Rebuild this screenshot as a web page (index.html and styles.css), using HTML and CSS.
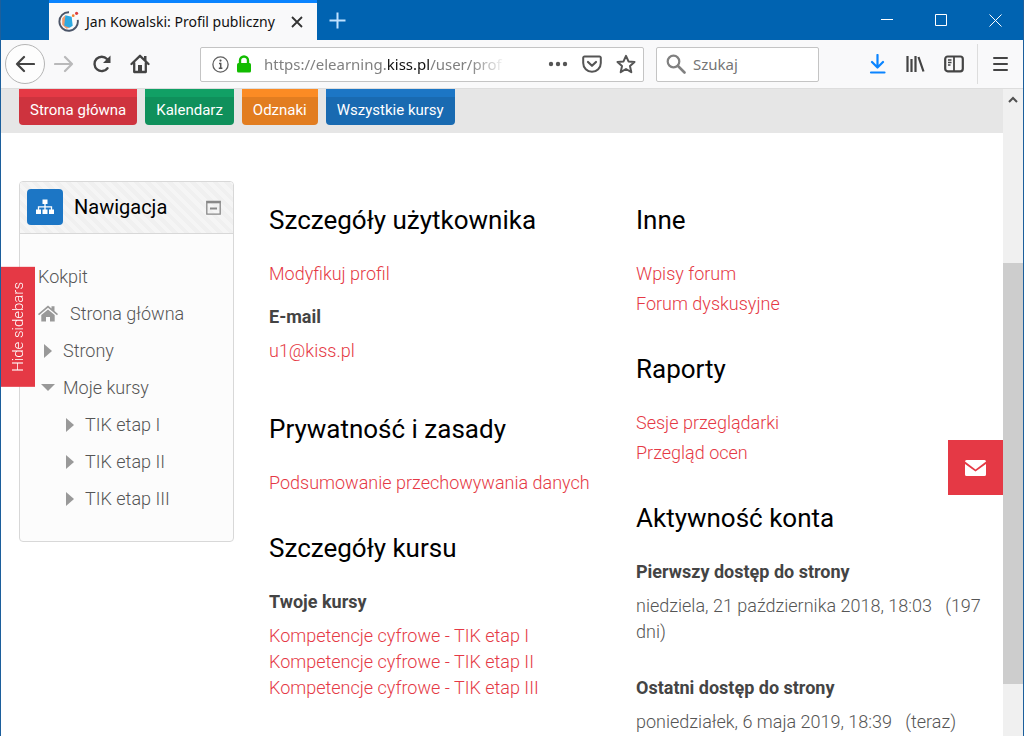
FILE: index.html
```html
<!DOCTYPE html>
<html lang="pl">
<head>
<meta charset="utf-8">
<meta name="viewport" content="width=device-width, initial-scale=1">
<title>Jan Kowalski: Profil publiczny</title>
<link rel="stylesheet" href="styles.css">
</head>
<body>
<div class="window">
  <header class="titlebar">
    <div class="tab">
      <svg class="favicon" viewBox="0 0 20 20" aria-hidden="true">
        <path d="M10.500 1.200A8.800 8.800 0 1 0 18.800 8.500" fill="none" stroke="#4b5568" stroke-width="1.800"/>
        <path d="M4 7l3-3v9l4 3-3 1-4-4z" fill="#f29a6c"/>
        <path d="M7 4l6 1.500 1 8.500-3 2-5-2z" fill="#2da9e1"/>
        <circle cx="14.500" cy="4.500" r="1.300" fill="#f08030"/>
        <circle cx="17.700" cy="2.200" r="1.500" fill="#dd3d3d"/>
      </svg>
      <span class="tab-title">Jan Kowalski: Profil publiczny</span>
      <button class="tab-close" aria-label="Zamknij kartę"><svg width="12" height="12" viewBox="0 0 12 12"><path d="M1 1l10 10M11 1L1 11" stroke="#333" stroke-width="1.800"/></svg></button>
    </div>
    <button class="new-tab" aria-label="Nowa karta"><svg width="17" height="17" viewBox="0 0 17 17"><path d="M8.500 0.500v16M0.500 8.500h16" stroke="#bfe2ff" stroke-width="2"/></svg></button>
    <div class="window-controls">
      <button aria-label="Minimalizuj"><svg width="12" height="12" viewBox="0 0 12 12"><path d="M0 5.500h12" stroke="#fff"/></svg></button>
      <button aria-label="Maksymalizuj"><svg width="12" height="12" viewBox="0 0 12 12"><path d="M.5.5h11v11H.5z" fill="none" stroke="#fff"/></svg></button>
      <button aria-label="Zamknij"><svg width="13" height="13" viewBox="0 0 13 13"><path d="M.5.5l12 12M12.500.5l-12 12" stroke="#fff"/></svg></button>
    </div>
  </header>

  <div class="toolbar">
    <div class="nav-buttons">
      <button class="back" aria-label="Wstecz"><svg width="20" height="18" viewBox="0 0 20 18"><path d="M19 9H2M9 2L2 9l7 7" fill="none" stroke="#444" stroke-width="2.200" stroke-linecap="round" stroke-linejoin="round"/></svg></button>
      <button aria-label="Dalej"><svg width="20" height="18" viewBox="0 0 20 18"><path d="M1 9h17M11 2l7 7-7 7" fill="none" stroke="#b9b9ba" stroke-width="2.200" stroke-linecap="round" stroke-linejoin="round"/></svg></button>
      <button aria-label="Odśwież"><svg width="20" height="20" viewBox="0 0 20 20"><path d="M15.500 14.200A7.200 7.200 0 1 1 15 5" fill="none" stroke="#444" stroke-width="2.400" stroke-linecap="round"/><path d="M18.500 1.500v7.500h-7.500z" fill="#444"/></svg></button>
      <button aria-label="Strona startowa"><svg width="20" height="20" viewBox="0 0 20 20"><path d="M1.500 10L10 1.800l8.500 8.200M4.200 9v9h11.600V9" fill="none" stroke="#444" stroke-width="2.300" stroke-linecap="round" stroke-linejoin="round"/><path d="M8 11h4v7H8zM14 2h2.500v5L14 5z" fill="#444"/></svg></button>
    </div>
    <div class="url-bar">
      <svg width="17" height="17" viewBox="0 0 17 17" aria-hidden="true"><circle cx="8.500" cy="8.500" r="7.600" fill="none" stroke="#606060" stroke-width="1.300"/><path d="M7 7.500h1.700V12M6.800 12.300h3.600" fill="none" stroke="#555" stroke-width="1.500"/><circle cx="8.500" cy="4.600" r="1.100" fill="#555"/></svg>
      <svg class="lock" width="16" height="18" viewBox="0 0 16 18" aria-hidden="true"><path d="M4 9V5.500a4 4 0 0 1 8 0V9" fill="none" stroke="#12bc00" stroke-width="2.400"/><rect x="1" y="8" width="14" height="9.500" rx="1.500" fill="#12bc00"/></svg>
      <div class="url" role="textbox" contenteditable="true" spellcheck="false" aria-label="Adres strony">https://elearning.<b>kiss.pl</b>/user/prof</div>
      <div class="url-actions">
        <button aria-label="Działania strony"><svg width="20" height="20" viewBox="0 0 20 20" fill="#555"><circle cx="3" cy="10" r="2.200"/><circle cx="10" cy="10" r="2.200"/><circle cx="17" cy="10" r="2.200"/></svg></button>
        <button aria-label="Zapisz w Pocket"><svg width="20" height="20" viewBox="0 0 20 20"><path d="M2.500 2.500h15a1.300 1.300 0 0 1 1.300 1.300V9a8.800 8.800 0 0 1-17.600 0V3.800a1.300 1.300 0 0 1 1.300-1.300z" fill="none" stroke="#555" stroke-width="2"/><path d="M6 8l4 3.800L14 8" fill="none" stroke="#555" stroke-width="2.200" stroke-linecap="round" stroke-linejoin="round"/></svg></button>
        <button aria-label="Dodaj zakładkę"><svg width="20" height="20" viewBox="0 0 20 20"><path d="M10 1.800l2.500 5.600 6 .6-4.500 4.100 1.300 6.100-5.300-3.200-5.300 3.200L6 12.100 1.500 8l6-.6z" fill="none" stroke="#555" stroke-width="2" stroke-linejoin="round"/></svg></button>
      </div>
    </div>
    <label class="search">
      <svg width="20" height="20" viewBox="0 0 20 20" aria-hidden="true"><circle cx="7.500" cy="7.500" r="5.800" fill="none" stroke="#808080" stroke-width="2.200"/><path d="M12 12l6.500 6.500" stroke="#808080" stroke-width="2.600" stroke-linecap="round"/></svg>
      <input type="text" placeholder="Szukaj" aria-label="Szukaj">
    </label>
    <div class="tool-buttons">
      <button aria-label="Pobrane pliki"><svg width="18" height="20" viewBox="0 0 18 20"><path d="M8.500 1v12M3 8l5.500 5.500L14 8M2 18.500h13.500" fill="none" stroke="#0a84ff" stroke-width="2.200" stroke-linecap="round" stroke-linejoin="round"/></svg></button>
      <button aria-label="Biblioteka"><svg width="19" height="18" viewBox="0 0 19 18"><path d="M1.500 1v16M5.500 4v13M9.500 1v16M12.500 2l5 14.500" stroke="#444" stroke-width="2.200"/></svg></button>
      <button aria-label="Panel boczny"><svg width="20" height="18" viewBox="0 0 20 18"><rect x="1.200" y="1.500" width="17.600" height="14.800" rx="2.500" fill="none" stroke="#444" stroke-width="2.200"/><path d="M10 2v14" stroke="#444" stroke-width="1.800"/><path d="M4 5h3.500M4 7.500h3.500M4 10h2.500" stroke="#444" stroke-width="1.300"/></svg></button>
    </div>
    <button class="menu" aria-label="Menu"><svg width="15" height="16" viewBox="0 0 15 16"><path d="M1 2h13M1 8h13M1 14h13" stroke="#444" stroke-width="2" stroke-linecap="round"/></svg></button>
  </div>

  <div class="viewport">
    <div class="page">
      <nav class="site-nav">
        <a class="pill red" href="#">Strona główna</a>
        <a class="pill green" href="#">Kalendarz</a>
        <a class="pill orange" href="#">Odznaki</a>
        <a class="pill blue" href="#">Wszystkie kursy</a>
      </nav>

      <div class="content">
        <aside class="block">
          <div class="block-head">
            <span class="block-icon"><svg width="18" height="16" viewBox="0 0 18 16" aria-hidden="true"><path d="M6.500 0.500h5v4.500h-5zM0 10.500h5v4.500H0zM6.500 10.500h5v4.500h-5zM13 10.500h5v4.500h-5z" fill="#fff"/><path d="M9 5v6M2.500 11V7.800h13V11" fill="none" stroke="#fff" stroke-width="1.300"/></svg></span>
            <h2>Nawigacja</h2>
            <button class="collapse" aria-label="Ukryj blok"><svg width="15" height="15" viewBox="0 0 15 15"><path d="M.8 1.500h13.400v12.700H.8z" fill="none" stroke="#888" stroke-width="1.300"/><path d="M.5 2.200h14" stroke="#888" stroke-width="2.200"/><path d="M4 8.500h7" stroke="#888" stroke-width="2"/></svg></button>
          </div>
          <ul class="tree">
            <li><a href="#">Kokpit</a></li>
            <li class="home"><svg width="20" height="17" viewBox="0 0 20 17" aria-hidden="true"><path d="M0 9L10 .5l3.500 3V1.200h3V6L20 9l-1 1.300-9-7.500-9 7.500z" fill="#999"/><path d="M3.300 10L10 4.500l6.700 5.500v6.500H12v-4.500H8v4.500H3.300z" fill="#999"/></svg><a href="#">Strona główna</a></li>
            <li class="branch"><i class="caret"></i><a href="#">Strony</a></li>
            <li class="branch"><i class="caret open"></i><a href="#">Moje kursy</a></li>
            <li class="branch leaf"><i class="caret"></i><a href="#">TIK etap I</a></li>
            <li class="branch leaf"><i class="caret"></i><a href="#">TIK etap II</a></li>
            <li class="branch leaf"><i class="caret"></i><a href="#">TIK etap III</a></li>
          </ul>
        </aside>

        <main class="profile">
          <div class="column">
            <section>
              <h3>Szczegóły użytkownika</h3>
              <ul class="nodes">
                <li><a href="#">Modyfikuj profil</a></li>
                <li><dl><dt>E-mail</dt><dd><a href="#">u1@kiss.pl</a></dd></dl></li>
              </ul>
            </section>
            <section>
              <h3>Prywatność i zasady</h3>
              <ul class="nodes"><li><a href="#">Podsumowanie przechowywania danych</a></li></ul>
            </section>
            <section>
              <h3>Szczegóły kursu</h3>
              <ul class="nodes">
                <li><dl><dt>Twoje kursy</dt>
                  <dd><a href="#">Kompetencje cyfrowe - TIK etap I</a></dd>
                  <dd><a href="#">Kompetencje cyfrowe - TIK etap II</a></dd>
                  <dd><a href="#">Kompetencje cyfrowe - TIK etap III</a></dd></dl></li>
              </ul>
            </section>
          </div>
          <div class="column">
            <section>
              <h3>Inne</h3>
              <ul class="nodes">
                <li><a href="#">Wpisy forum</a></li>
                <li><a href="#">Forum dyskusyjne</a></li>
              </ul>
            </section>
            <section>
              <h3>Raporty</h3>
              <ul class="nodes">
                <li><a href="#">Sesje przeglądarki</a></li>
                <li><a href="#">Przegląd ocen</a></li>
              </ul>
            </section>
            <section>
              <h3>Aktywność konta</h3>
              <ul class="nodes">
                <li><dl><dt>Pierwszy dostęp do strony</dt><dd>niedziela, 21 października 2018, 18:03&nbsp;&nbsp; (197 dni)</dd></dl></li>
                <li><dl><dt>Ostatni dostęp do strony</dt><dd>poniedziałek, 6 maja 2019, 18:39&nbsp;&nbsp; (teraz)</dd></dl></li>
              </ul>
            </section>
          </div>
        </main>
      </div>

      <button class="hide-sidebars">Hide sidebars</button>
      <button class="message" aria-label="Wiadomość"><svg width="21" height="16" viewBox="0 0 21 16"><path d="M1.500 0h18q1.500 0 1.500 1.500L10.500 9.500 0 1.500Q0 0 1.500 0z" fill="#fff"/><path d="M0 4l10.500 7.500L21 4v10.500q0 1.500-1.500 1.500h-18Q0 16 0 14.500z" fill="#fff"/></svg></button>
    </div>
    <div class="scrollbar">
      <button aria-label="Przewiń w górę"><svg width="10" height="7" viewBox="0 0 10 7"><path d="M1 6l4-4 4 4" fill="none" stroke="#505050" stroke-width="2"/></svg></button>
      <div class="track"><div class="thumb"></div></div>
    </div>
  </div>
</div>
</body>
</html>
```
FILE: styles.css
```css
* { box-sizing: border-box; }
body { margin: 0; font-family: Roboto, sans-serif; font-size: 18px; line-height: 26px; font-weight: 300; color: #555; }
button { display: flex; align-items: center; justify-content: center; padding: 0; border: 0; background: none; font: inherit; }
ul, dl, dd, h2, h3 { margin: 0; padding: 0; }
ul { list-style: none; }
a { color: #e53945; text-decoration: none; }
svg { flex: none; }

.window { display: flex; flex-direction: column; height: 100vh; overflow: hidden; border: solid #1c5f9c; border-width: 0 1px; background: #fff; }

.titlebar { display: flex; height: 40px; flex: none; padding: 0 1px 0 48px; background: #0063b1; }
.tab { display: flex; align-items: center; width: 268px; padding: 0 14px 0 9px; border-top: 3px solid #0a84ff; background: #f9f9fa; font-family: "Noto Sans", sans-serif; font-size: 14px; font-weight: 400; color: #111; }
.favicon { width: 21px; height: 21px; margin-right: 7px; }
.tab-title { flex: 1; white-space: nowrap; }
.new-tab { width: 40px; }
.window-controls { display: flex; margin-left: auto; }
.window-controls button { width: 54px; }

.toolbar { display: flex; align-items: center; height: 49px; flex: none; padding: 0 1px 0 4px; border-bottom: 1px solid #ddd; background: #f9f9fa; font-family: "Noto Sans", sans-serif; font-weight: 400; }
.nav-buttons { display: flex; align-items: center; width: 195px; }
.nav-buttons button { width: 38px; height: 40px; }
.nav-buttons .back { width: 40px; border: 1px solid #b5b5b5; border-radius: 50%; background: #fdfdfd; }
.url-bar, .search { display: flex; align-items: center; height: 35px; border: 1px solid #c4c4c4; border-radius: 2px; background: #fff; }
.url-bar { flex: 1; min-width: 0; padding: 0 7px 0 11px; }
.lock { margin: 0 12px 0 7px; }
.url { flex: 1; min-width: 0; overflow: hidden; white-space: nowrap; font-size: 15px; color: #808080; outline: 0; mask-image: linear-gradient(to left, transparent, #000 36px); }
.url b { font-weight: 400; color: #111; }
.url-actions { display: flex; gap: 14px; margin-left: 42px; }
.search { width: 163px; gap: 7px; margin-left: 12px; padding-left: 9px; }
.search input { width: 100%; min-width: 0; padding: 0; border: 0; outline: 0; background: none; font: 15px "Noto Sans", sans-serif; color: #333; }
.search input::placeholder { color: #757575; opacity: 1; }
.tool-buttons { display: flex; align-items: center; gap: 19px; margin-left: 50px; padding-right: 13px; }
.menu { width: 45px; height: 40px; border-left: 1px solid #ddd; }

.viewport { display: flex; flex: 1; min-height: 0; }
.page { position: relative; flex: 1; min-width: 0; overflow: hidden; }
.site-nav { display: flex; gap: 8px; height: 44px; padding: 0 18px 8px; background: #e6e6e6; }
.pill { display: flex; align-items: center; padding: 6px 11px 0; border-radius: 0 0 4px 4px; font-size: 15px; font-weight: 400; color: #fff; }
.red { background: linear-gradient(#e53945 8px, #ce333e 8px); }
.green { background: linear-gradient(#11a065 8px, #0f905b 8px); }
.orange { background: linear-gradient(#fb8b24 8px, #e27d20 8px); }
.blue { background: linear-gradient(#1c76c5 8px, #196ab1 8px); }

.content { display: flex; align-items: flex-start; gap: 35px; padding: 48px 18px 0; }
.block { width: 215px; flex: none; border: 1px solid #d8d8d8; border-radius: 4px; background: #fcfcfc; }
.block-head { display: flex; align-items: center; gap: 11px; padding: 7px 12px 8px 7px; border-bottom: 1px solid #d8d8d8; border-radius: 3px 3px 0 0; background: repeating-linear-gradient(45deg, #f5f5f5 0 4px, #f0f0f0 4px 8px); }
.block-icon { display: flex; align-items: center; justify-content: center; width: 36px; height: 36px; border-radius: 4px; background: #1c76c5; }
.block-head h2 { flex: 1; font-size: 20px; font-weight: 400; color: #000; }
.tree { padding: 24px 18px; }
.tree li { display: flex; align-items: center; height: 37px; }
.tree a { color: #555; }
.home { gap: 12px; }
.branch { padding-left: 2px; }
.leaf { padding-left: 24px; }
.caret { display: flex; width: 23px; }
.caret::before { content: ""; margin-left: 4px; border: solid transparent; border-width: 7px 0 7px 8px; border-left-color: #999; }
.caret.open::before { margin-left: 1px; border-width: 7px 7px 0; border-color: #999 transparent; }

.profile { display: grid; flex: 1; grid-template-columns: 1fr 1fr; gap: 18px; min-width: 0; padding-top: 23px; }
.profile h3 { margin-bottom: 25px; font-size: 26px; line-height: 32px; font-weight: 400; color: #000; }
.profile section { padding-bottom: 36px; }
.nodes { display: flex; flex-direction: column; gap: 4px; }
.nodes a { display: block; }
.nodes dl { margin: 13px 0; }
.nodes li:first-child dl { margin-top: 0; }
.nodes dt { margin-bottom: 8px; font-weight: 700; color: #444; }

.hide-sidebars { position: absolute; top: 178px; left: 0; padding: 15px 4px; background: #e53945; color: #fff; font-size: 15px; writing-mode: vertical-rl; rotate: 180deg; }
.message { position: absolute; top: 351px; right: 0; width: 55px; height: 55px; background: #e53945; }

.scrollbar { display: flex; flex-direction: column; width: 20px; flex: none; background: #f0f0f0; }
.scrollbar button { height: 20px; }
.track { display: flex; flex: 1; flex-direction: column; }
.track::before { content: ""; flex: 154; }
.track::after { content: ""; flex: 52; }
.thumb { flex: 421; background: #cdcdcd; }
```
